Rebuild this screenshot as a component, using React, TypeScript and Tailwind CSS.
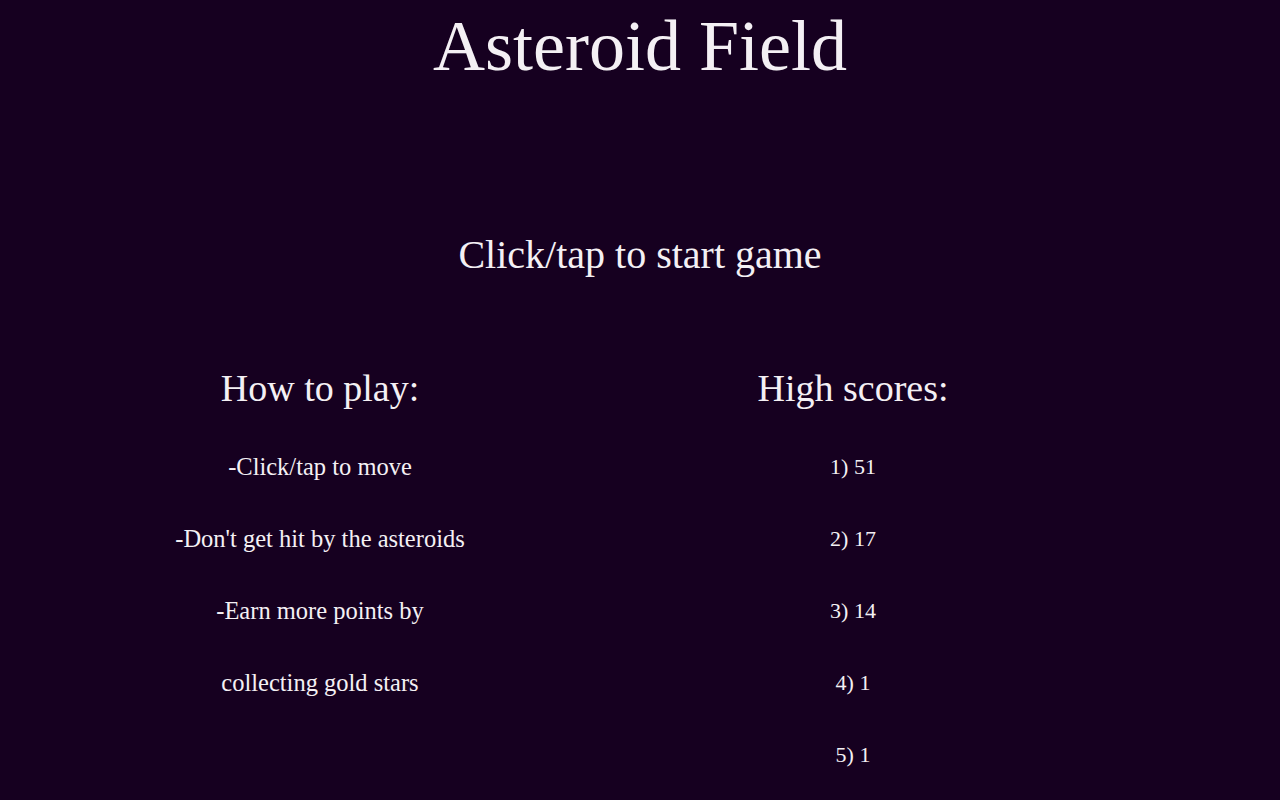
import React from "react";

export default function App() {
  const steps = [
    "-Click/tap to move",
    "-Don't get hit by the asteroids",
    "-Earn more points by",
    "collecting gold stars",
  ];
  const scores = ["1) 51", "2) 17", "3) 14", "4) 1", "5) 1"];
  return (
    <div
      className="w-[1280px] h-[800px] overflow-hidden bg-[#160020] text-[#f4f0f4] flex flex-col items-center"
      style={{ fontFamily: '"Liberation Serif", Georgia, serif' }}
    >
      <h1 className="text-[72px] leading-none mt-[10px]">Asteroid Field</h1>
      <p className="text-[40px] leading-none mt-[153px]">Click/tap to start game</p>
      <div className="w-full flex mt-[94px]">
        <div className="w-[640px] flex flex-col items-center">
          <h2 className="text-[38px] leading-none">How to play:</h2>
          <div className="flex flex-col items-center mt-[49px] gap-[50px]">
            {steps.map((s) => (
              <p key={s} className="text-[24.5px] leading-[22px]">{s}</p>
            ))}
          </div>
        </div>
        <div className="w-[426px] flex flex-col items-center">
          <h2 className="text-[38px] leading-none">High scores:</h2>
          <div className="flex flex-col items-center mt-[49px] gap-[50px]">
            {scores.map((s) => (
              <p key={s} className="text-[22px] leading-[22px]">{s}</p>
            ))}
          </div>
        </div>
      </div>
    </div>
  );
}
